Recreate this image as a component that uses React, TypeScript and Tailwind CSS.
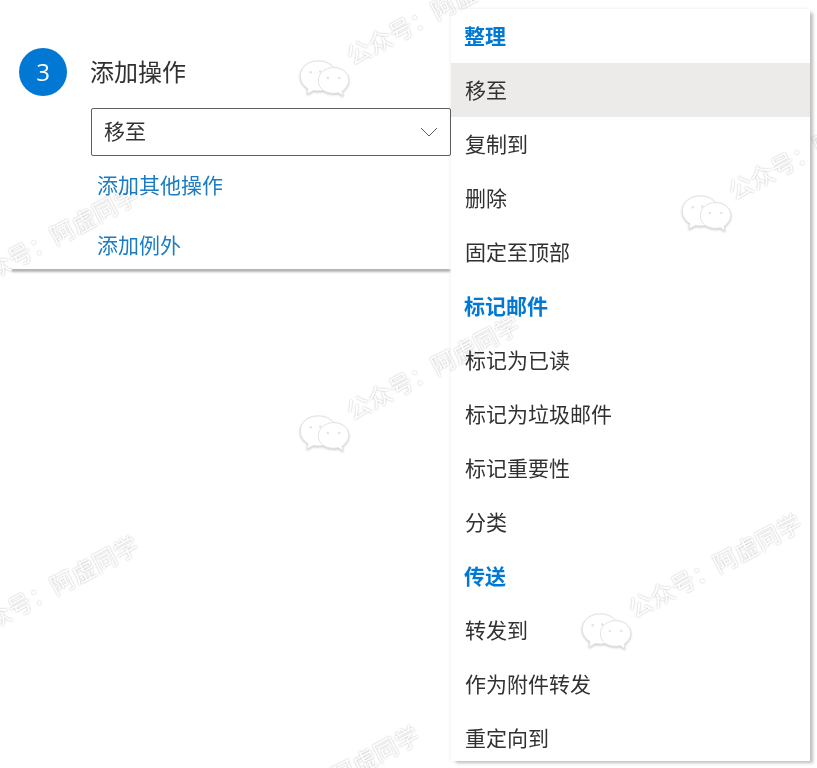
const groups = [
  { title: "整理", items: ["移至", "复制到", "删除", "固定至顶部"] },
  { title: "标记邮件", items: ["标记为已读", "标记为垃圾邮件", "标记重要性", "分类"] },
  { title: "传送", items: ["转发到", "作为附件转发", "重定向到"] },
]

// icon position of each watermark, text runs up and to the right from it
const marks = [
  { left: 298, top: 60 },
  { left: 680, top: 195 },
  { left: 298, top: 415 },
  { left: 580, top: 613 },
  { left: -83, top: 285 },
  { left: -83, top: 635 },
  { left: 198, top: 825 },
]

function Watermark({ left, top }: { left: number; top: number }) {
  return (
    <div className="absolute w-[280px] h-[40px]" style={{ left, top }}>
      <svg
        width="54"
        height="38"
        viewBox="0 0 54 40"
        className="absolute left-0 top-0 drop-shadow-[0_1px_1px_#c8c8c8]"
      >
        <path
          d="M20 1C9 1 1 8 1 17c0 5 3 10 8 13l-1 6 7-4c2 .5 3 .6 5 .6 11 0 19-7 19-15.600C39 8 31 1 20 1z"
          fill="#fff"
          stroke="#e2e2e2"
          strokeWidth="1"
        />
        <path
          d="M36 8c-9 0-16 6-16 14s7 13 16 13c2 0 3 0 5-.5l5 3.500-1-5c4-3 7-7 7-11.500C52 14 45 8 36 8z"
          fill="#fff"
          stroke="#e2e2e2"
          strokeWidth="1"
        />
        <circle cx="12" cy="13" r="1.300" fill="#e2e2e2" />
        <circle cx="22" cy="12" r="1.300" fill="#e2e2e2" />
        <circle cx="30" cy="19" r="1.300" fill="#e2e2e2" />
        <circle cx="42" cy="19" r="1.300" fill="#e2e2e2" />
      </svg>
      <span className="absolute left-[50px] top-[-14px] origin-left -rotate-[28deg] whitespace-nowrap text-[24px] leading-none text-white [text-shadow:0_0_2px_#b4b4b4]">
        公众号：阿虚同学
      </span>
    </div>
  )
}

function StepPanel() {
  return (
    <div className="ml-[10px] h-[269px] w-[442px] shrink-0 bg-white pl-[9px] pt-[48px] shadow-[0_5px_2px_-2px_#b4b4b4]">
      <div className="flex items-center gap-[23px]">
        <div className="flex h-[48px] w-[48px] items-center justify-center rounded-full bg-[#0078d4] text-[24px] text-white">
          3
        </div>
        <div className="text-[24px] leading-[32px] text-[#323130]">添加操作</div>
      </div>
      <div className="ml-[72px] mt-[12px] flex h-[48px] w-[360px] items-center justify-between rounded-[2px] border border-[#605e5c] pl-[12px] pr-[12px] text-[21px] text-[#323130]">
        <span>移至</span>
        <svg width="18" height="10" viewBox="0 0 18 10" fill="none" stroke="#605e5c" strokeWidth="1">
          <path d="M1 1l8 8 8-8" />
        </svg>
      </div>
      <div className="ml-[78px] mt-[13px] text-[21px] leading-[32px] text-[#1b7cc4]">添加其他操作</div>
      <div className="ml-[78px] mt-[28px] text-[21px] leading-[32px] text-[#1b7cc4]">添加例外</div>
    </div>
  )
}

function ActionMenu() {
  return (
    <div className="relative z-10 ml-[-1px] mt-[9px] h-[752px] w-[359px] shrink-0 bg-white shadow-[4px_3px_3px_-1px_#c0c0c0,0_0_4px_rgba(0,0,0,0.08)]">
      {groups.map((group) => (
        <div key={group.title}>
          <div className="flex h-[54px] items-center pl-[13px] pt-[2px] text-[21px] font-bold text-[#0078d4]">
            {group.title}
          </div>
          {group.items.map((item) => (
            <div
              key={item}
              className={`flex h-[54px] items-center pl-[14px] pt-[2px] text-[21px] text-[#323130] ${
                item === "移至" && group.title === "整理" ? "bg-[#edebe9]" : ""
              }`}
            >
              {item}
            </div>
          ))}
        </div>
      ))}
    </div>
  )
}

export default function App() {
  return (
    <div className="relative flex h-[768px] w-[817px] items-start overflow-hidden bg-white font-['Open_Sans','Noto_Sans_CJK_SC',sans-serif]">
      <StepPanel />
      <ActionMenu />
      <div className="pointer-events-none absolute inset-0 z-20 mix-blend-multiply">
        {marks.map((m) => (
          <Watermark key={`${m.left}-${m.top}`} left={m.left} top={m.top} />
        ))}
      </div>
    </div>
  )
}
